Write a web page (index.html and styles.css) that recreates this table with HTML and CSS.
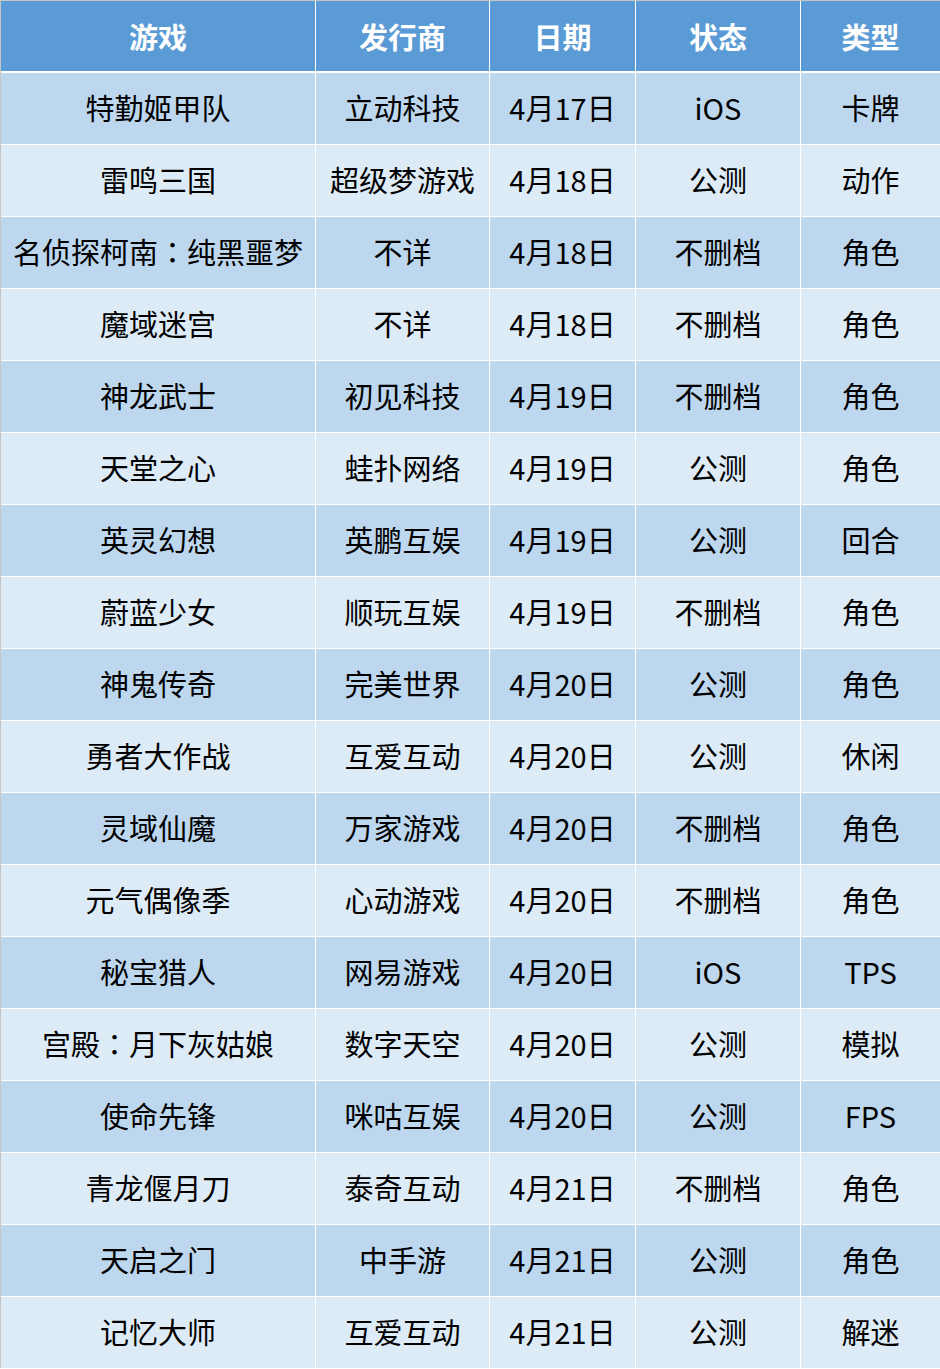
FILE: index.html
```html
<!DOCTYPE html>
<html lang="zh-CN">
<head>
<meta charset="utf-8">
<title>新游表</title>
<link rel="stylesheet" href="styles.css">
</head>
<body>
<div class="sheet">
  <div class="cell head">游戏</div><div class="cell head">发行商</div><div class="cell head">日期</div><div class="cell head">状态</div><div class="cell head">类型</div>

  <div class="cell odd">特勤姬甲队</div><div class="cell odd">立动科技</div><div class="cell odd">4月17日</div><div class="cell odd">iOS</div><div class="cell odd">卡牌</div>
  <div class="cell even">雷鸣三国</div><div class="cell even">超级梦游戏</div><div class="cell even">4月18日</div><div class="cell even">公测</div><div class="cell even">动作</div>
  <div class="cell odd">名侦探柯南<span class="colon">：</span>纯黑噩梦</div><div class="cell odd">不详</div><div class="cell odd">4月18日</div><div class="cell odd">不删档</div><div class="cell odd">角色</div>
  <div class="cell even">魔域迷宫</div><div class="cell even">不详</div><div class="cell even">4月18日</div><div class="cell even">不删档</div><div class="cell even">角色</div>
  <div class="cell odd">神龙武士</div><div class="cell odd">初见科技</div><div class="cell odd">4月19日</div><div class="cell odd">不删档</div><div class="cell odd">角色</div>
  <div class="cell even">天堂之心</div><div class="cell even">蛙扑网络</div><div class="cell even">4月19日</div><div class="cell even">公测</div><div class="cell even">角色</div>
  <div class="cell odd">英灵幻想</div><div class="cell odd">英鹏互娱</div><div class="cell odd">4月19日</div><div class="cell odd">公测</div><div class="cell odd">回合</div>
  <div class="cell even">蔚蓝少女</div><div class="cell even">顺玩互娱</div><div class="cell even">4月19日</div><div class="cell even">不删档</div><div class="cell even">角色</div>
  <div class="cell odd">神鬼传奇</div><div class="cell odd">完美世界</div><div class="cell odd">4月20日</div><div class="cell odd">公测</div><div class="cell odd">角色</div>
  <div class="cell even">勇者大作战</div><div class="cell even">互爱互动</div><div class="cell even">4月20日</div><div class="cell even">公测</div><div class="cell even">休闲</div>
  <div class="cell odd">灵域仙魔</div><div class="cell odd">万家游戏</div><div class="cell odd">4月20日</div><div class="cell odd">不删档</div><div class="cell odd">角色</div>
  <div class="cell even">元气偶像季</div><div class="cell even">心动游戏</div><div class="cell even">4月20日</div><div class="cell even">不删档</div><div class="cell even">角色</div>
  <div class="cell odd">秘宝猎人</div><div class="cell odd">网易游戏</div><div class="cell odd">4月20日</div><div class="cell odd">iOS</div><div class="cell odd">TPS</div>
  <div class="cell even">宫殿<span class="colon">：</span>月下灰姑娘</div><div class="cell even">数字天空</div><div class="cell even">4月20日</div><div class="cell even">公测</div><div class="cell even">模拟</div>
  <div class="cell odd">使命先锋</div><div class="cell odd">咪咕互娱</div><div class="cell odd">4月20日</div><div class="cell odd">公测</div><div class="cell odd">FPS</div>
  <div class="cell even">青龙偃月刀</div><div class="cell even">泰奇互动</div><div class="cell even">4月21日</div><div class="cell even">不删档</div><div class="cell even">角色</div>
  <div class="cell odd">天启之门</div><div class="cell odd">中手游</div><div class="cell odd">4月21日</div><div class="cell odd">公测</div><div class="cell odd">角色</div>
  <div class="cell even">记忆大师</div><div class="cell even">互爱互动</div><div class="cell even">4月21日</div><div class="cell even">公测</div><div class="cell even">解迷</div>
</div>
</body>
</html>
```

FILE: styles.css
```css
html, body {
  margin: 0;
  padding: 0;
  background: #ffffff;
}

.sheet {
  display: grid;
  grid-template-columns: 314px 173px 145px 164px 139px;
  grid-auto-rows: 71px;
  gap: 1px;
  width: 939px;
  background: #ffffff;
  border-top: 1px solid #c6c6c6;
  border-left: 1px solid #c6c6c6;
  font-family: "Noto Sans CJK SC", "Noto Sans", sans-serif;
  font-size: 29px;
  color: #000000;
}

.cell {
  display: flex;
  align-items: center;
  justify-content: center;
  white-space: nowrap;
  box-sizing: border-box;
  padding-bottom: 3px;
}

.colon {
  font-family: "Noto Sans CJK JP", "Noto Sans CJK SC", sans-serif;
}

.head {
  background: #5b9bd5;
  color: #ffffff;
  font-weight: 700;
  height: 71px;
  border-bottom: 1px solid #ffffff;
  padding-bottom: 1px;
}

.odd {
  background: #bdd7ee;
}

.even {
  background: #ddebf7;
}
```
